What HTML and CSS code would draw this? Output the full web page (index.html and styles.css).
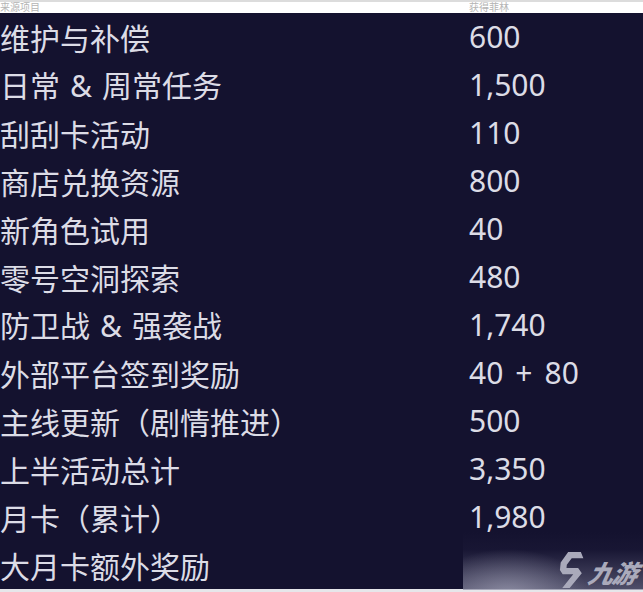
FILE: index.html
```html
<!DOCTYPE html>
<html lang="zh">
<head>
<meta charset="utf-8">
<link rel="stylesheet" href="styles.css">
</head>
<body>
<div class="page">
  <div class="head">
    <span class="hcol-a">来源项目</span>
    <span class="hcol-b">获得菲林</span>
  </div>
  <div class="table">
    <div class="row"><span class="name">维护与补偿</span><span class="val">600</span></div>
    <div class="row"><span class="name">日常<span class="op amp">&amp;</span>周常任务</span><span class="val">1,500</span></div>
    <div class="row"><span class="name">刮刮卡活动</span><span class="val">110</span></div>
    <div class="row"><span class="name">商店兑换资源</span><span class="val">800</span></div>
    <div class="row"><span class="name">新角色试用</span><span class="val">40</span></div>
    <div class="row"><span class="name">零号空洞探索</span><span class="val">480</span></div>
    <div class="row"><span class="name">防卫战<span class="op amp">&amp;</span>强袭战</span><span class="val">1,740</span></div>
    <div class="row"><span class="name">外部平台签到奖励</span><span class="val">40<span class="op">+</span>80</span></div>
    <div class="row"><span class="name">主线更新（剧情推进）</span><span class="val">500</span></div>
    <div class="row"><span class="name">上半活动总计</span><span class="val">3,350</span></div>
    <div class="row"><span class="name">月卡（累计）</span><span class="val">1,980</span></div>
    <div class="row"><span class="name">大月卡额外奖励</span><span class="val"></span></div>
  </div>
  <div class="foot"></div>
  <div class="watermark">
    <svg class="logo" viewBox="0 0 22 34" width="25" height="36">
      <path d="M7 0 H19 L22 6 H11 L7 12 V15 H18 L22 20 L12 34 H5 L14 21 H4 L1 17 V10 Z" fill="#aaaabb"/>
    </svg>
    <span class="brand">九游</span>
  </div>
</div>
</body>
</html>
```

FILE: styles.css
```css
html, body {
  margin: 0;
  padding: 0;
  background: #14122f;
}
.page {
  position: relative;
  width: 643px;
  height: 592px;
  overflow: hidden;
  font-family: "Noto Sans", "Noto Sans CJK SC", sans-serif;
}
.head {
  height: 13px;
  box-sizing: border-box;
  background: #ffffff;
  box-shadow: inset 0 2px 0 #dcdcdc;
  display: flex;
  align-items: center;
  font-family: "Noto Sans CJK SC", sans-serif;
  font-size: 10px;
  line-height: 13px;
  color: #b4b4b4;
}
.hcol-a {
  width: 469px;
}
.table {
  display: flex;
  flex-direction: column;
}
.row {
  height: 48px;
  display: flex;
  align-items: center;
  color: #dcdce6;
  font-size: 30px;
  line-height: 48px;
}
.name {
  width: 469px;
  font-family: "Noto Sans CJK SC", sans-serif;
}
.name, .val {
  white-space: nowrap;
}
.val {
  font-family: "Noto Sans", "Noto Sans CJK SC", sans-serif;
}
.op {
  font-family: "Noto Sans", sans-serif;
  margin: 0 12px;
}
.op.amp {
  margin: 0 10px;
}
.foot {
  height: 3px;
  background: #e6e6ea;
}
.watermark {
  position: absolute;
  left: 463px;
  top: 532px;
  width: 180px;
  height: 58px;
  background:
    radial-gradient(ellipse 80px 45px at 45px 62px, rgba(175,175,195,0.6), rgba(175,175,195,0) 100%),
    linear-gradient(to top, rgba(120,120,145,0.6), rgba(40,38,70,0.2) 70%, rgba(20,18,47,0));
  display: flex;
  align-items: flex-end;
  justify-content: flex-end;
  gap: 6px;
  padding: 0 6px 2px 0;
  box-sizing: border-box;
}
.logo {
  display: block;
  transform: skewX(-6deg);
}
.brand {
  font-family: "Noto Sans CJK SC", sans-serif;
  font-weight: 900;
  font-style: italic;
  font-size: 25px;
  line-height: 32px;
  color: #aaaabb;
  transform: skewX(-12deg);
  letter-spacing: -1px;
}
```
